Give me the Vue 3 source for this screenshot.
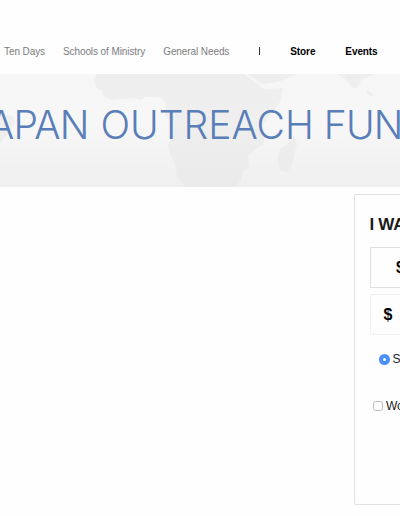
<script setup>
const funds = ['Ten Days', 'Schools of Ministry', 'General Needs']
const links = ['Store', 'Events']
</script>

<template>
  <div class="page">
    <nav class="nav">
      <a v-for="f in funds" :key="f" class="fund">{{ f }}</a>
      <span class="divider"></span>
      <a v-for="l in links" :key="l" class="link">{{ l }}</a>
    </nav>
    <header class="banner">
      <svg class="map" viewBox="0 0 400 113" aria-hidden="true">
        <path class="land" d="M97 0 L94 8 L97 14 L102 17 L104 22 L112 26 L132 24 L142 26 L144 23 L158 23 L164 27 L166 31 L165 39 L171 50 L173 60 L168 72 L171 82 L175 90 L177 103 L185 113 L235 113 L241 106 L242 99 L249 93 L248 82 L255 75 L263 71 L265 62 L262 52 L271 40 L280 28 L283 14 L264 15 L256 9 L244 0 Z" />
        <path class="land" d="M248 0 L262 10 L278 8 L294 2 L296 0 Z" />
        <path class="land" d="M338 0 L346 6 L352 13 L356 15 L362 5 L367 4 L374 0 Z" />
        <path class="land" d="M366 15 L373 20 L372 23 L367 20 Z" />
        <path class="land" d="M0 40 L13 42 L15 48 L8 60 L0 69 Z" />
        <path class="land" d="M294 62 L297 70 L292 90 L287 98 L280 96 L277 86 L280 75 L287 70 Z" />
      </svg>
      <h1 class="title"><span>APAN</span><span class="wide">OUTREACH</span><span>FUN</span></h1>
    </header>
    <main class="main">
      <section class="card">
        <h2 class="heading">I WA</h2>
        <div class="preset">$</div>
        <div class="amount">$</div>
        <label class="option single"><i class="radio"></i>S</label>
        <label class="option worker"><i class="check"></i>Wo</label>
      </section>
    </main>
  </div>
</template>

<style>
body { margin: 0; background: #fefefe; overflow: hidden; }
</style>

<style scoped>
.page {
  width: 400px;
  height: 516px;
  overflow: hidden;
  font-family: "Liberation Sans", Arial, sans-serif;
  white-space: nowrap;
}
.nav {
  display: flex;
  align-items: center;
  height: 74px;
  padding: 29px 0 0 4px;
  box-sizing: border-box;
  font-size: 10px;
  line-height: 12px;
}
.fund { flex: none; color: #7c7c7c; margin-right: 18px; letter-spacing: -0.09px; }
.divider { flex: none; width: 1px; height: 8px; margin: -2px 30px 0 12px; background: #333; }
.link { flex: none; color: #000; font-weight: bold; margin-right: 30px; letter-spacing: -0.1px; }
.banner {
  position: relative;
  height: 113px;
  overflow: hidden;
  background: linear-gradient(180deg, #f6f6f6 0%, #f7f7f7 45%, #efefef 100%);
}
.map { position: absolute; inset: 0; width: 400px; height: 113px; }
.land { fill: #e4e4e4; fill-opacity: 0.45; }
.title {
  position: relative;
  display: flex;
  margin: 0 0 0 -12px;
  padding-top: 27px;
  font-family: Inter, "Liberation Sans", sans-serif;
  font-size: 39px;
  line-height: 48px;
  font-weight: 300;
  letter-spacing: -0.8px;
  color: #597eb8;
}
.title .wide { margin: 0 10px 0 12px; letter-spacing: -0.03px; }
.main { padding: 7px 0 0 354px; }
.card {
  width: 300px;
  height: 311px;
  box-sizing: border-box;
  padding: 20px 0 0 15px;
  border: 1px solid #e2e2e2;
  border-radius: 2px;
}
.heading {
  margin: 0 0 0 -0.5px;
  font-size: 17px;
  line-height: 20px;
  letter-spacing: -0.3px;
  color: #1b1b1b;
}
.preset, .amount {
  width: 200px;
  height: 41px;
  box-sizing: border-box;
  font-size: 16px;
  line-height: 39px;
  font-weight: bold;
  color: #000;
}
.preset { margin-top: 12px; padding-left: 25px; border: 1px solid #dfdfdf; }
.amount { margin-top: 6px; padding-left: 12.5px; border: 1px solid #f0f0f0; border-radius: 2px; }
.option {
  display: flex;
  align-items: center;
  height: 14px;
  font-size: 12px;
  line-height: 14px;
  color: #222;
}
.single { margin: 17px 0 0 9px; gap: 2.5px; }
.worker { margin: 33px 0 0 3px; gap: 3px; }
.radio, .check { box-sizing: border-box; flex: none; }
.radio { width: 11px; height: 11px; border: 4px solid #4a90fb; border-radius: 50%; background: #fff; }
.check { width: 10px; height: 10px; border: 1px solid #bcbcbc; border-radius: 2.5px; background: #fff; }
</style>
